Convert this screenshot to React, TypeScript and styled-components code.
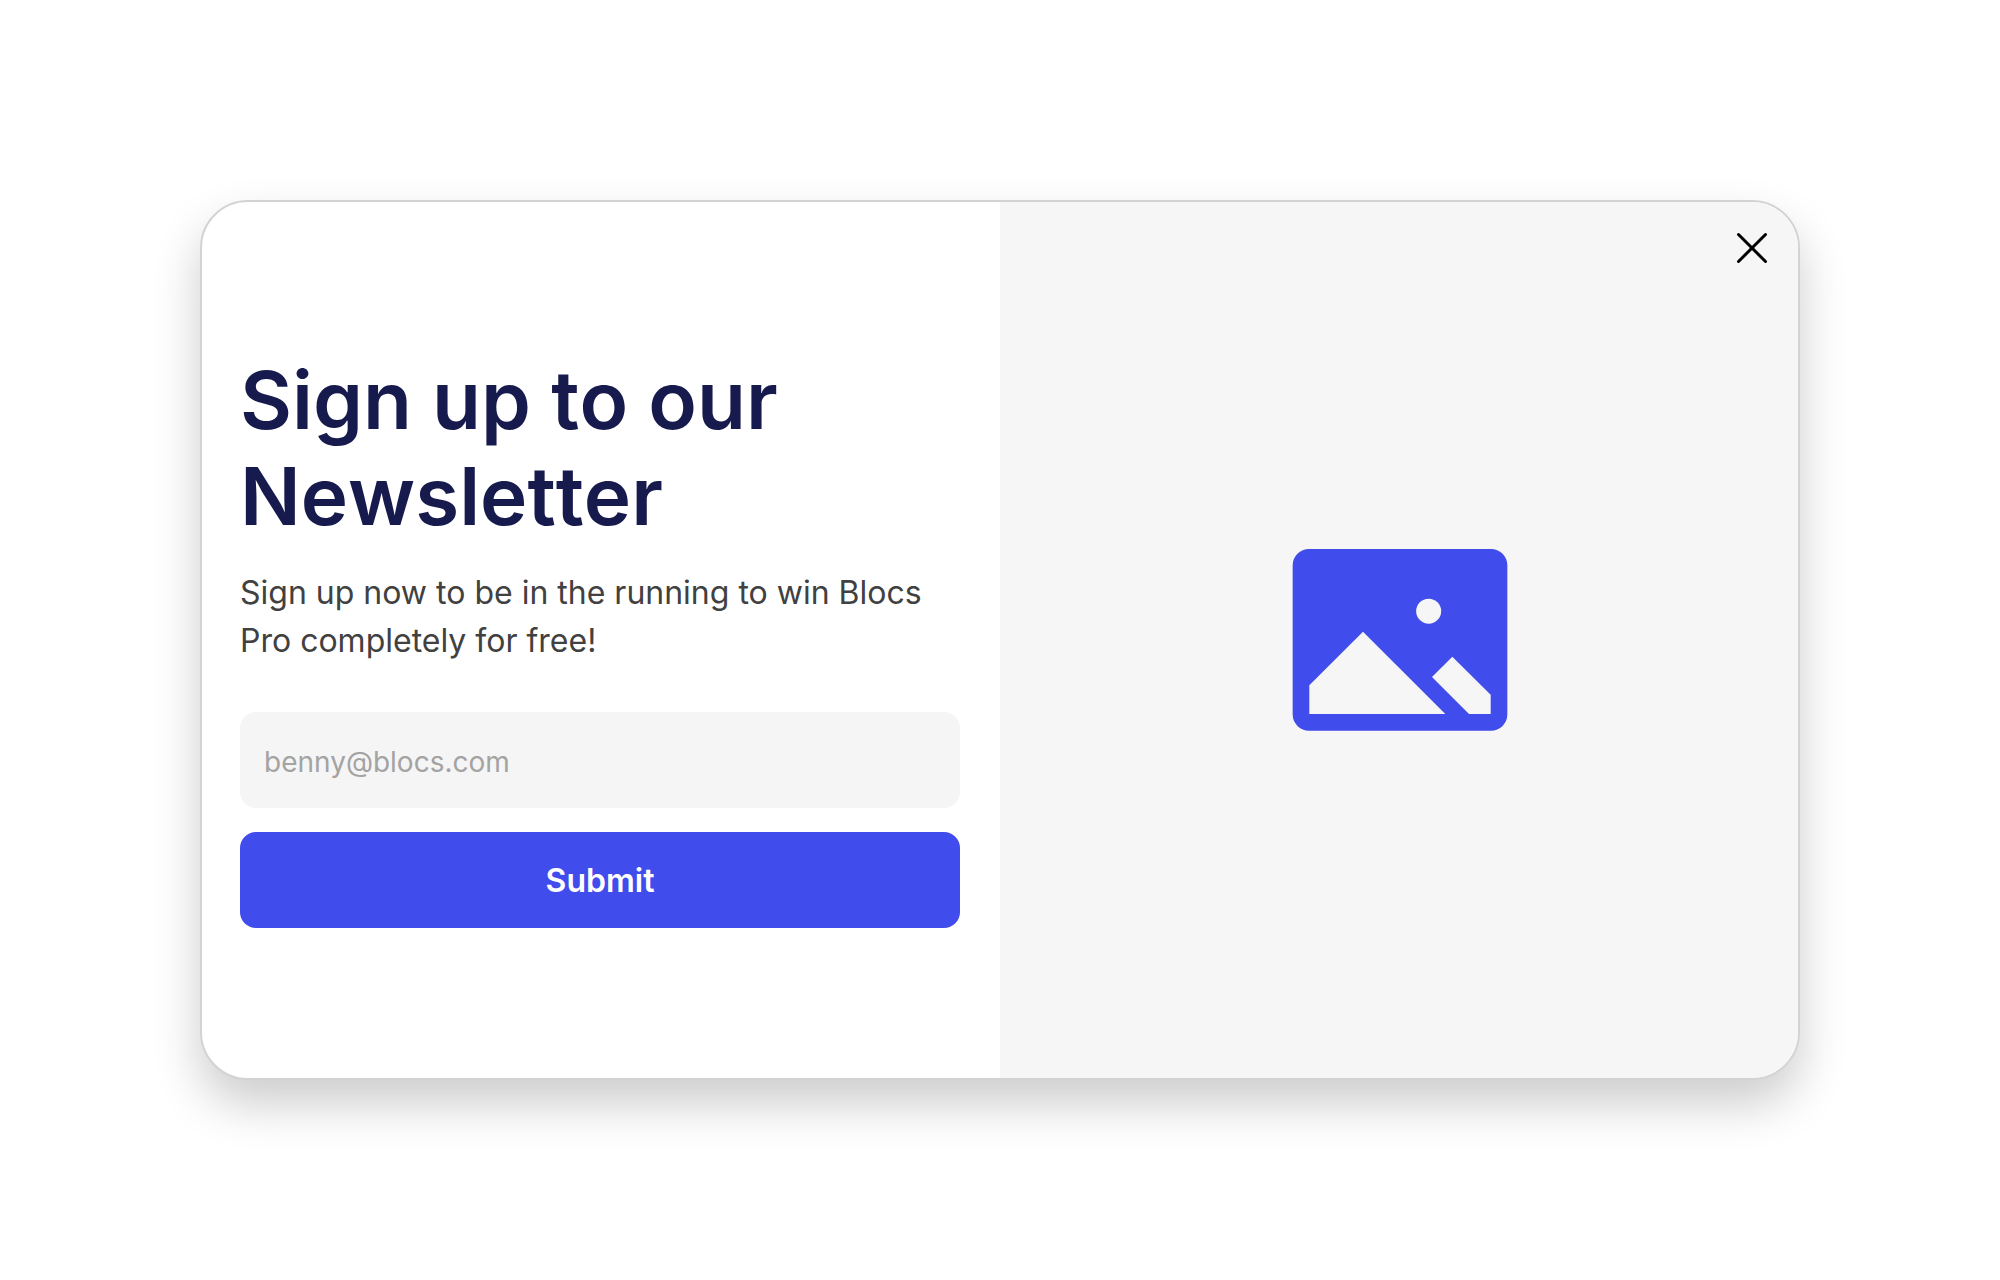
import React from "react";
import styled, { createGlobalStyle } from "styled-components";

const GlobalStyle = createGlobalStyle`
  *, *::before, *::after { box-sizing: border-box; }
  body {
    margin: 0;
    background: #ffffff;
    color: #414141;
    font-family: Inter, "Liberation Sans", sans-serif;
  }
`;

const Page = styled.main`
  display: flex;
  align-items: center;
  justify-content: center;
  min-height: 100vh;
  padding: 40px;
`;

const Dialog = styled.section`
  position: relative;
  display: grid;
  grid-template-columns: 1fr 1fr;
  width: 100%;
  max-width: 1600px;
  min-height: 880px;
  overflow: hidden;
  background: #ffffff;
  border: 2px solid #d3d3d3;
  border-radius: 48px;
  box-shadow: 0 24px 48px rgba(0, 0, 0, 0.2);
`;

const Content = styled.div`
  display: flex;
  flex-direction: column;
  justify-content: center;
  padding: 40px 40px 40px 38px;
`;

const Title = styled.h1`
  margin: 0 0 25px;
  color: #171a4d;
  font-size: 80px;
  font-weight: 600;
  font-kerning: none;
  line-height: 96px;
`;

const Lead = styled.p`
  margin: 0 0 47px;
  font-size: 32px;
  line-height: 48px;
`;

const Form = styled.form`
  display: flex;
  flex-direction: column;
  gap: 24px;
`;

const EmailInput = styled.input`
  width: 100%;
  height: 96px;
  padding: 4px 24px 0;
  border: 0;
  border-radius: 16px;
  background: #f5f5f5;
  color: #414141;
  font-family: inherit;
  font-size: 28px;

  &::placeholder {
    color: #a3a3a3;
    opacity: 1;
  }
`;

const SubmitButton = styled.button`
  height: 96px;
  border: 0;
  border-radius: 16px;
  background: #404ceb;
  color: #ffffff;
  font-family: inherit;
  font-size: 32px;
  font-weight: 600;
  cursor: pointer;
`;

const Media = styled.div`
  display: flex;
  align-items: center;
  justify-content: center;
  background: #f6f6f6;
`;

const CloseButton = styled.button`
  position: absolute;
  top: 22px;
  right: 22px;
  display: flex;
  padding: 0;
  border: 0;
  background: transparent;
  color: #000000;
  cursor: pointer;
`;

function PictureIcon() {
  return (
    <svg width="260" height="220" viewBox="-3 0 780 660" role="img" aria-label="Image placeholder">
      <rect x="68" y="57" width="644" height="545" rx="49" fill="#404ceb" />
      <circle cx="476" cy="243.500" r="37.500" fill="#f6f6f6" />
      <path d="M279 305 L526 552 H118 V466 Z" fill="#f6f6f6" />
      <path d="M547 380 L662 494 V552 H597 L486 441 Z" fill="#f6f6f6" />
    </svg>
  );
}

function CloseIcon() {
  return (
    <svg width="48" height="48" viewBox="0 0 48 48" fill="none" aria-hidden="true">
      <path
        d="M10.500 10.500 L37.500 37.500 M37.500 10.500 L10.500 37.500"
        stroke="currentColor"
        strokeWidth="3"
        strokeLinecap="round"
      />
    </svg>
  );
}

export default function App() {
  return (
    <>
      <GlobalStyle />
      <Page>
        <Dialog role="dialog" aria-labelledby="newsletter-title">
          <Content>
            <Title id="newsletter-title">Sign up to our Newsletter</Title>
            <Lead>Sign up now to be in the running to win Blocs Pro completely for free!</Lead>
            <Form onSubmit={(event) => event.preventDefault()}>
              <EmailInput type="email" aria-label="Email address" placeholder="benny@blocs.com" />
              <SubmitButton type="submit">Submit</SubmitButton>
            </Form>
          </Content>
          <Media>
            <PictureIcon />
          </Media>
          <CloseButton type="button" aria-label="Close">
            <CloseIcon />
          </CloseButton>
        </Dialog>
      </Page>
    </>
  );
}
